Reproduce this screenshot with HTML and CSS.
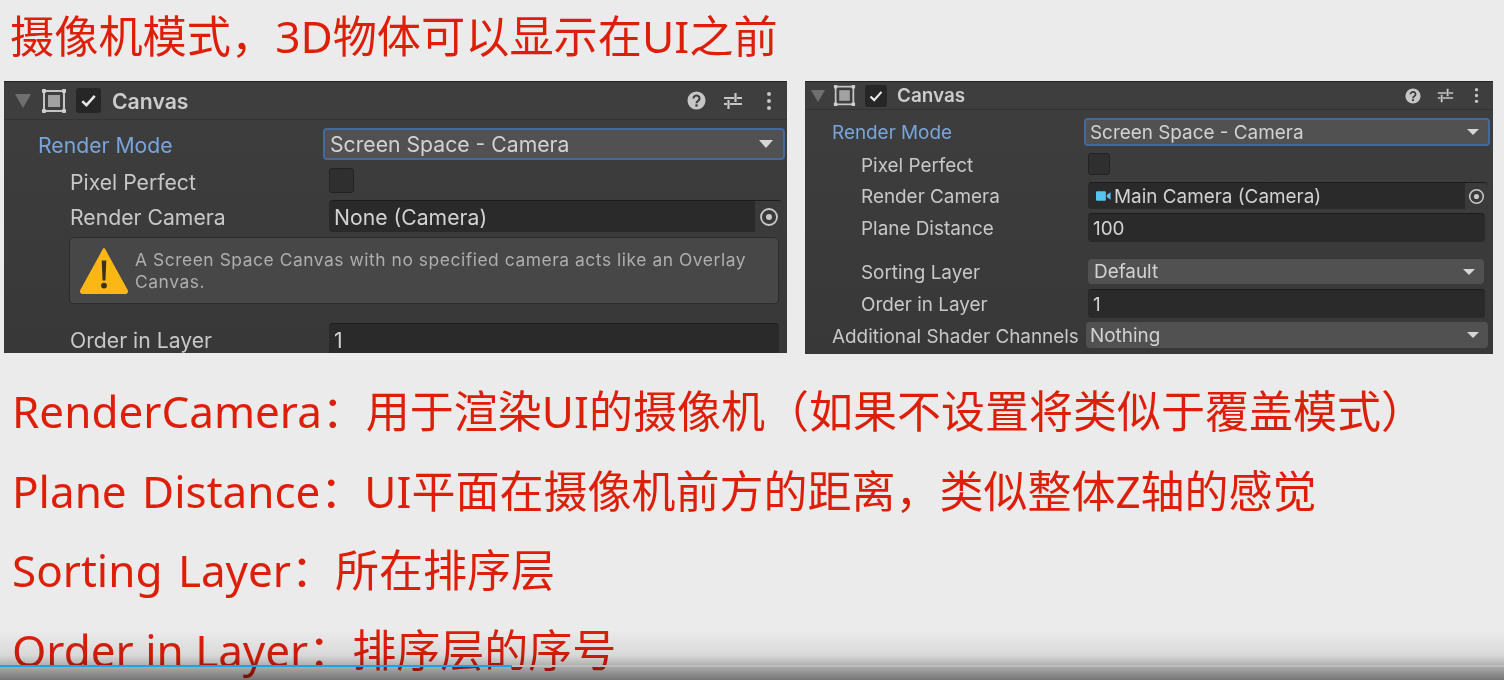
FILE: index.html
```html
<!DOCTYPE html>
<html lang="zh">
<head>
    <meta charset="UTF-8">
    <title>摄像机模式</title>
    <link rel="stylesheet" href="styles.css">
</head>
<body>
    <svg class="defs">
        <symbol id="rect-icon" viewBox="0 0 26 26">
            <rect x="3" y="3" width="20" height="20" fill="none" stroke="#c4c4c4" stroke-width="2"/>
            <rect x="7" y="7" width="12" height="12" fill="#a2a2a2"/>
            <rect x="1" y="1" width="4" height="4" rx="1" fill="#d0d0d0"/>
            <rect x="21" y="1" width="4" height="4" rx="1" fill="#d0d0d0"/>
            <rect x="1" y="21" width="4" height="4" rx="1" fill="#d0d0d0"/>
            <rect x="21" y="21" width="4" height="4" rx="1" fill="#d0d0d0"/>
        </symbol>
        <symbol id="check-icon" viewBox="0 0 24 24">
            <path d="M6 12.5l4 4L18 7.5" fill="none" stroke="#e8e8e8" stroke-width="2.4"/>
        </symbol>
        <symbol id="help-icon" viewBox="0 0 20 20">
            <circle cx="10" cy="10" r="9.5" fill="#c6c6c6"/>
            <path d="M6.8 7.8a3.2 3 0 1 1 4.9 2.5c-1.1.7-1.7 1.2-1.7 2.5" fill="none" stroke="#3c3c3c" stroke-width="2.2"/>
            <rect x="8.8" y="14" width="2.4" height="2.4" fill="#3c3c3c"/>
        </symbol>
        <symbol id="sliders-icon" viewBox="0 0 20 20">
            <path d="M1 7h10M14 7h5M1 13h3M7 13h12" stroke="#c6c6c6" stroke-width="1.8" fill="none"/>
            <path d="M12.5 2v9M5.5 9v9" stroke="#c6c6c6" stroke-width="2.2" fill="none"/>
        </symbol>
        <symbol id="dots-icon" viewBox="0 0 6 20">
            <circle cx="3" cy="3" r="2" fill="#c6c6c6"/>
            <circle cx="3" cy="10" r="2" fill="#c6c6c6"/>
            <circle cx="3" cy="17" r="2" fill="#c6c6c6"/>
        </symbol>
        <symbol id="target-icon" viewBox="0 0 20 20">
            <circle cx="10" cy="10" r="8" fill="none" stroke="#c8c8c8" stroke-width="1.8"/>
            <circle cx="10" cy="10" r="3" fill="#c8c8c8"/>
        </symbol>
        <symbol id="warn-icon" viewBox="0 0 48 48">
            <path d="M24 3L46 43a1.5 1.5 0 0 1-1.5 2H3.5a1.5 1.5 0 0 1-1.5-2z" fill="#fbb713" stroke="#fbb713" stroke-width="2" stroke-linejoin="round"/>
            <path d="M21.8 14h4.4l-.8 19h-2.8z" fill="#3a3220"/>
            <circle cx="24" cy="38" r="2.8" fill="#3a3220"/>
        </symbol>
        <symbol id="camera-icon" viewBox="0 0 16 12">
            <rect x="0" y="1" width="10.5" height="10" rx="1" fill="#55c4ee"/>
            <path d="M11.5 5l4-3v8l-4-3z" fill="#55c4ee"/>
        </symbol>
    </svg>

    <main class="slide">
        <h1 class="title">摄像机模式，3D物体可以显示在UI之前</h1>

        <div class="panels">
            <section class="panel panel-large">
                <header class="panel-head">
                    <span class="foldout"></span>
                    <svg class="head-icon"><use href="#rect-icon"/></svg>
                    <span class="enable"><svg><use href="#check-icon"/></svg></span>
                    <span class="comp-name">Canvas</span>
                    <svg class="help"><use href="#help-icon"/></svg>
                    <svg class="sliders"><use href="#sliders-icon"/></svg>
                    <svg class="dots"><use href="#dots-icon"/></svg>
                </header>
                <div class="row row-mode">
                    <span class="label label-blue">Render Mode</span>
                    <div class="dropdown dropdown-focus">Screen Space - Camera<span class="arrow"></span></div>
                </div>
                <div class="row row-check sub">
                    <span class="label">Pixel Perfect</span>
                    <span class="checkbox"></span>
                </div>
                <div class="row row-camera sub">
                    <span class="label">Render Camera</span>
                    <div class="field object-field">None (Camera)<span class="picker"><svg><use href="#target-icon"/></svg></span></div>
                </div>
                <div class="helpbox">
                    <svg class="warn"><use href="#warn-icon"/></svg>
                    <p>A Screen Space Canvas with no specified camera acts like an Overlay Canvas.</p>
                </div>
                <div class="row row-order sub">
                    <span class="label">Order in Layer</span>
                    <div class="field">1</div>
                </div>
            </section>

            <section class="panel panel-small">
                <header class="panel-head">
                    <span class="foldout"></span>
                    <svg class="head-icon"><use href="#rect-icon"/></svg>
                    <span class="enable"><svg><use href="#check-icon"/></svg></span>
                    <span class="comp-name">Canvas</span>
                    <svg class="help"><use href="#help-icon"/></svg>
                    <svg class="sliders"><use href="#sliders-icon"/></svg>
                    <svg class="dots"><use href="#dots-icon"/></svg>
                </header>
                <div class="row row-mode">
                    <span class="label label-blue">Render Mode</span>
                    <div class="dropdown dropdown-focus">Screen Space - Camera<span class="arrow"></span></div>
                </div>
                <div class="row row-check sub">
                    <span class="label">Pixel Perfect</span>
                    <span class="checkbox"></span>
                </div>
                <div class="row row-camera sub">
                    <span class="label">Render Camera</span>
                    <div class="field object-field"><svg class="cam"><use href="#camera-icon"/></svg>Main Camera (Camera)<span class="picker"><svg><use href="#target-icon"/></svg></span></div>
                </div>
                <div class="row row-plane sub">
                    <span class="label">Plane Distance</span>
                    <div class="field">100</div>
                </div>
                <div class="row row-sorting sub">
                    <span class="label">Sorting Layer</span>
                    <div class="dropdown">Default<span class="arrow"></span></div>
                </div>
                <div class="row row-order sub">
                    <span class="label">Order in Layer</span>
                    <div class="field">1</div>
                </div>
                <div class="row row-shader">
                    <span class="label">Additional Shader Channels</span>
                    <div class="dropdown">Nothing<span class="arrow"></span></div>
                </div>
            </section>
        </div>

        <div class="notes">
            <p>RenderCamera：用于渲染UI的摄像机（如果不设置将类似于覆盖模式）</p>
            <p class="wide-gap">Plane Distance：UI平面在摄像机前方的距离，类似整体Z轴的感觉</p>
            <p class="wide-gap">Sorting Layer：所在排序层</p>
            <p>Order in Layer：排序层的序号</p>
        </div>
    </main>

    <div class="player-shade"></div>
    <div class="progress"><div class="progress-done"></div></div>
</body>
</html>
```

FILE: styles.css
```css
* {
    box-sizing: border-box;
}
html, body {
    margin: 0;
    height: 100%;
    overflow: hidden;
}
body {
    background-color: #ebebeb;
    font-family: "Noto Sans", "Noto Sans CJK SC", sans-serif;
}
.defs {
    display: none;
}
.slide {
    height: 680px;
    overflow: hidden;
}
.title {
    margin: 0;
    height: 81px;
    padding: 8px 0 0 10px;
    font-size: 44.2px;
    line-height: 56px;
    font-weight: 400;
    color: #dd1f0a;
    white-space: nowrap;
    filter: blur(0.4px);
}
.notes {
    padding: 18px 0 0 12px;
    filter: blur(0.4px);
}
.notes p {
    margin: 0;
    height: 79.5px;
    line-height: 79.5px;
    font-size: 44px;
    color: #dd1f0a;
    white-space: nowrap;
}
.notes .wide-gap {
    word-spacing: 4px;
}

/* inspector panels */
.panels {
    display: flex;
    gap: 18px;
    padding-left: 4px;
}
.panel {
    flex: none;
    overflow: hidden;
    background: linear-gradient(to bottom, #3e3e3e, #383838);
    border-top: 1px solid #232323;
    color: #c8c8c8;
    font-family: Inter, sans-serif;
    filter: blur(0.6px);
}
.panel-large {
    width: 783px;
    height: 272px;
    font-size: 21.2px;
}
.panel-small {
    width: 688px;
    height: 273px;
    font-size: 18.9px;
}
.panel-head {
    display: flex;
    align-items: center;
    background-color: #3e3e3e;
    border-bottom: 1px solid #333;
}
.foldout {
    width: 0;
    height: 0;
    border-style: solid;
    border-color: #6f6f6f transparent transparent;
}
.head-icon, .help, .sliders, .dots {
    flex: none;
}
.enable {
    display: flex;
    flex: none;
    background-color: #262626;
    border-radius: 3px;
}
.enable svg {
    width: 100%;
    height: 100%;
}
.comp-name {
    flex: 1;
    font-weight: 600;
    color: #cdcdcd;
}
.row {
    display: flex;
    align-items: center;
}
.label {
    flex: none;
    white-space: nowrap;
    padding-top: 2px;
}
.label-blue {
    color: #78a5dc;
}
.dropdown, .field {
    flex: 1;
    display: flex;
    align-items: center;
    height: 100%;
    border-radius: 4px;
    white-space: nowrap;
}
.dropdown {
    background-color: #515151;
    color: #d2d2d2;
}
.dropdown-focus {
    border: 2px solid #44699c;
}
.arrow {
    margin-left: auto;
    width: 0;
    height: 0;
    border-style: solid;
    border-color: #d6d6d6 transparent transparent;
}
.field {
    background-color: #2a2a2a;
    border-top: 1px solid #1c1c1c;
    color: #d2d2d2;
}
.object-field {
    overflow: hidden;
}
.picker {
    display: flex;
    align-items: center;
    justify-content: center;
    margin-left: auto;
    height: 100%;
    background-color: #3a3a3a;
}
.checkbox {
    flex: none;
    background-color: #2f2f2f;
    border: 1px solid #232323;
    border-radius: 3px;
}
.helpbox {
    display: flex;
    align-items: center;
    background-color: #474747;
    border: 1px solid #2c2c2c;
    border-radius: 4px;
    color: #aeaeae;
}
.helpbox p {
    margin: 0;
}

/* large panel sizes */
.panel-large .panel-head {
    height: 38px;
    padding: 0 15px 0 11px;
}
.panel-large .foldout {
    border-width: 14px 8px 0;
    margin-right: 10px;
}
.panel-large .head-icon {
    width: 26px;
    height: 26px;
    margin-right: 9px;
}
.panel-large .enable {
    width: 25px;
    height: 25px;
    margin-right: 11px;
}
.panel-large .help {
    width: 19px;
    height: 19px;
    margin-right: 17px;
}
.panel-large .sliders {
    width: 20px;
    height: 20px;
    margin-right: 23px;
}
.panel-large .dots {
    width: 6px;
    height: 20px;
}
.panel-large .label {
    width: 319px;
    padding-left: 34px;
}
.panel-large .sub .label {
    width: 325px;
    padding-left: 66px;
}
.panel-large .row-mode {
    height: 32px;
    margin: 8px 2px 0 0;
}
.panel-large .dropdown-focus {
    padding: 0 10px 0 5px;
}
.panel-large .arrow {
    border-width: 8px 7px 0;
}
.panel-large .row-check {
    height: 25px;
    margin-top: 8px;
}
.panel-large .checkbox {
    width: 25px;
    height: 25px;
}
.panel-large .row-camera {
    height: 32px;
    margin: 7px 5px 0 0;
}
.panel-large .field {
    padding-left: 5px;
}
.panel-large .picker {
    width: 27px;
}
.panel-large .picker svg {
    width: 20px;
    height: 20px;
}
.panel-large .helpbox {
    height: 67px;
    margin: 5px 8px 0 65px;
    padding: 0 28px 0 9px;
    font-size: 17.4px;
    line-height: 22px;
    letter-spacing: 0.55px;
}
.panel-large .warn {
    flex: none;
    width: 50px;
    height: 50px;
    margin-right: 6px;
}
.panel-large .row-order {
    height: 32px;
    margin: 19px 8px 0 0;
}

/* small panel sizes */
.panel-small .panel-head {
    height: 28px;
    padding: 0 14px 0 6px;
}
.panel-small .foldout {
    border-width: 12px 7px 0;
    margin-right: 8px;
}
.panel-small .head-icon {
    width: 23px;
    height: 23px;
    margin-right: 9px;
}
.panel-small .enable {
    width: 22px;
    height: 22px;
    margin-right: 10px;
}
.panel-small .help {
    width: 16px;
    height: 16px;
    margin-right: 16px;
}
.panel-small .sliders {
    width: 17px;
    height: 17px;
    margin-right: 20px;
}
.panel-small .dots {
    width: 5px;
    height: 17px;
}
.panel-small .label {
    width: 279px;
    padding-left: 27px;
}
.panel-small .sub .label {
    width: 283px;
    padding-left: 56px;
}
.panel-small .label-blue {
    padding-top: 0;
}
.panel-small .row-mode {
    height: 28px;
    margin: 8px 3px 0 0;
}
.panel-small .arrow {
    border-width: 6px 6px 0;
}
.panel-small .row-check {
    height: 22px;
    margin-top: 7px;
}
.panel-small .checkbox {
    width: 22px;
    height: 22px;
}
.panel-small .row-camera {
    height: 27px;
    margin: 7px 5px 0 0;
}
.panel-small .field {
    padding-left: 5px;
}
.panel-small .picker {
    width: 23px;
}
.panel-small .picker svg {
    width: 17px;
    height: 17px;
}
.panel-small .cam {
    flex: none;
    width: 15px;
    height: 12px;
    margin: 0 3px 0 3px;
}
.panel-small .row-plane {
    height: 29px;
    margin: 4px 8px 0 0;
}
.panel-small .row-sorting {
    height: 25px;
    margin: 17px 9px 0 0;
}
.panel-small .dropdown {
    padding: 0 9px 0 6px;
}
.panel-small .row-mode .dropdown {
    padding: 0 9px 0 4px;
}
.panel-small .row-order {
    height: 29px;
    margin: 5px 8px 0 0;
}
.panel-small .row-shader {
    height: 26px;
    margin: 4px 5px 0 0;
}
.panel-small .row-shader .label {
    width: 281px;
}
.panel-small .row-shader .dropdown {
    padding-left: 4px;
}

/* video player overlay */
.player-shade {
    position: absolute;
    left: 0;
    right: 0;
    bottom: 0;
    height: 50px;
    background: linear-gradient(to bottom, rgba(0, 0, 0, 0), rgba(0, 0, 0, 0.08) 50%, rgba(0, 0, 0, 0.5));
}
.progress {
    position: absolute;
    left: 0;
    right: 0;
    top: 665px;
    height: 2px;
    background-color: #bdbdbd;
}
.progress-done {
    width: 512px;
    height: 100%;
    background-color: #1aa3ea;
}
```
